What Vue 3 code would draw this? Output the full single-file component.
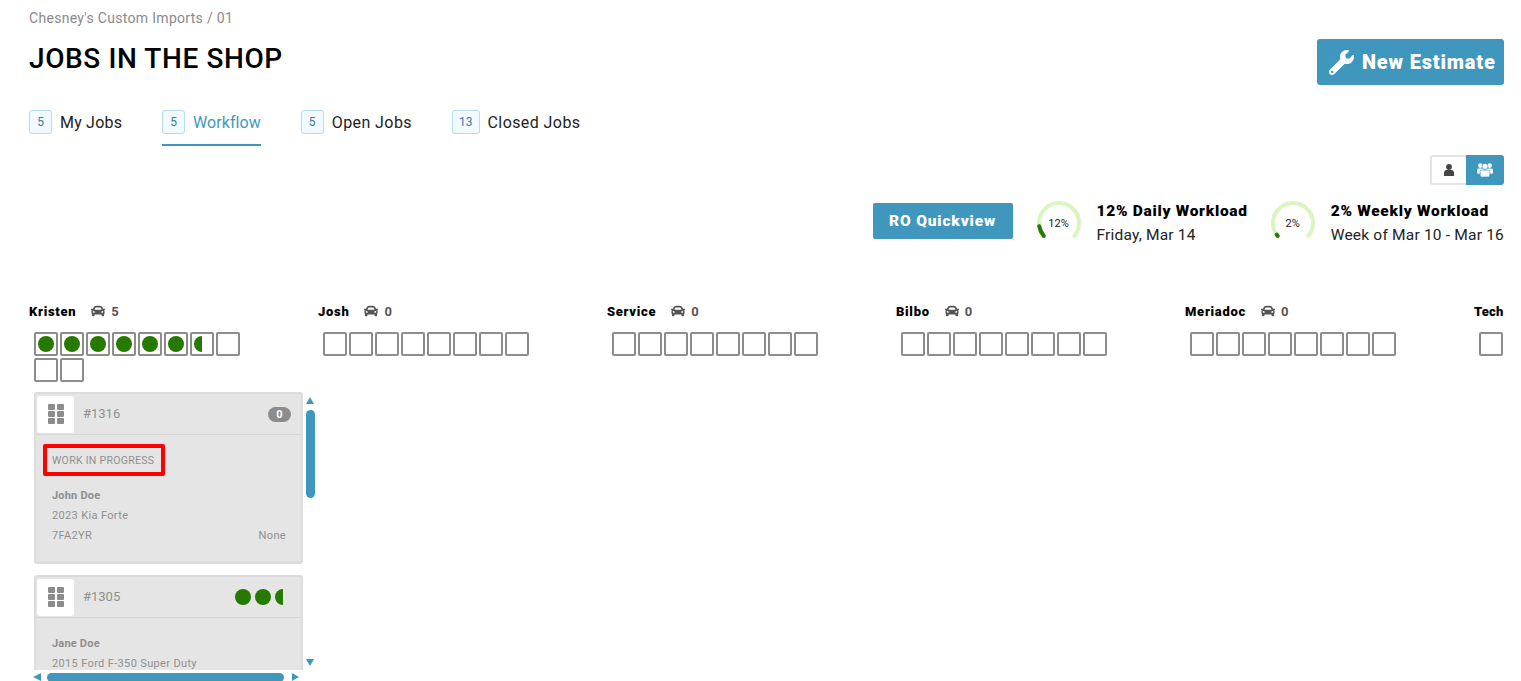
<template>
  <div class="page">
    <div class="crumb">Chesney's Custom Imports / 01</div>
    <div class="title-row">
      <h1>JOBS IN THE SHOP</h1>
      <button class="new-btn">
        <svg class="wrench" viewBox="0 0 512 512"><path fill="currentColor" :d="icons.wrench" /></svg>
        New Estimate
      </button>
    </div>

    <nav class="tabs">
      <a v-for="t in tabs" :key="t.label" class="tab" :class="{ active: t.active }">
        <span class="count">{{ t.count }}</span>{{ t.label }}
      </a>
    </nav>

    <div class="toggle-row">
      <div class="toggle">
        <span class="tg">
          <svg class="ic-user" viewBox="0 0 10 12" fill="currentColor">
            <circle cx="5" cy="3" r="2.9" />
            <path d="M0 12V8.6Q0 6.4 2.4 6h5.2Q10 6.4 10 8.6V12Z" />
          </svg>
        </span>
        <span class="tg on">
          <svg class="ic-users" viewBox="0 0 16 14" fill="currentColor">
            <circle cx="3.4" cy="2.6" r="2.3" />
            <circle cx="12.6" cy="2.6" r="2.3" />
            <rect x="0" y="5.4" width="16" height="5.4" rx="1.6" />
            <circle cx="8" cy="3.4" r="3" stroke="#3f97bd" stroke-width=".7" />
            <rect x="3.2" y="7" width="9.6" height="7" rx="1.4" stroke="#3f97bd" stroke-width=".7" />
          </svg>
        </span>
      </div>
    </div>

    <div class="stats">
      <button class="quick">RO Quickview</button>
      <div v-for="g in gauges" :key="g.title" class="stat">
        <div class="gauge">
          <svg width="44" height="44" viewBox="0 0 44 44">
            <path :d="arc" class="track" pathLength="100" />
            <path :d="arc" class="fill" pathLength="100" :stroke-dasharray="`${g.pct} 100`" />
          </svg>
          <span>{{ g.pct }}%</span>
        </div>
        <div class="stat-text">
          <b>{{ g.title }}</b>
          <span>{{ g.sub }}</span>
        </div>
      </div>
    </div>

    <div class="board">
      <section v-for="c in columns" :key="c.name" class="col">
        <header class="col-head">
          <b>{{ c.name }}</b>
          <template v-if="c.jobs !== null">
            <svg class="car" viewBox="0 0 512 512"><path fill="currentColor" :d="icons.car" /></svg>
            <span>{{ c.jobs }}</span>
          </template>
        </header>
        <div class="slots">
          <span v-for="n in c.slots" :key="n" class="slot">
            <i v-if="n <= c.full" class="dot"></i>
            <i v-else-if="n === c.full + 1 && c.half" class="dot half"></i>
          </span>
        </div>

        <template v-if="c.cards">
          <div class="list">
            <div class="cards">
              <article v-for="j in c.cards" :key="j.no" class="card">
                <div class="card-top">
                  <span class="grip"><i v-for="n in 6" :key="n"></i></span>
                  <span class="no">#{{ j.no }}</span>
                  <span v-if="j.badge !== undefined" class="badge">{{ j.badge }}</span>
                  <span v-else class="dots"><i></i><i></i><i class="cut"></i></span>
                </div>
                <div class="card-body">
                  <div v-if="j.status" class="status">{{ j.status }}</div>
                  <div class="who">{{ j.owner }}</div>
                  <div class="line">{{ j.car }}</div>
                  <div v-if="j.plate" class="line split"><span>{{ j.plate }}</span><span>{{ j.extra }}</span></div>
                </div>
              </article>
            </div>
            <div class="vbar">
              <i class="arrow up"></i>
              <i class="thumb"></i>
              <i class="arrow down"></i>
            </div>
          </div>
          <div class="hbar">
            <i class="arrow left"></i>
            <i class="thumb"></i>
            <i class="arrow right"></i>
          </div>
        </template>
      </section>
    </div>
  </div>
</template>

<script setup>
const icons = {
  wrench: 'M507.73 109.1c-2.24-9.03-13.54-12.09-20.12-5.51l-74.36 74.36-67.88-11.31-11.31-67.88 74.36-74.36c6.62-6.62 3.43-17.9-5.66-20.16-47.38-11.74-99.55.91-136.58 37.93-39.64 39.64-50.55 97.1-34.05 147.2L18.74 402.76c-24.99 24.99-24.99 65.51 0 90.5 24.99 24.99 65.51 24.99 90.5 0l213.21-213.21c50.12 16.71 107.47 5.68 147.37-34.22 37.07-37.07 49.7-89.32 37.91-136.73zM64 472c-13.25 0-24-10.75-24-24 0-13.26 10.75-24 24-24s24 10.74 24 24c0 13.25-10.75 24-24 24z',
  car: 'M499.99 176h-59.87l-16.64-41.6C406.38 91.63 365.57 64 319.5 64h-127c-46.06 0-86.88 27.63-103.99 70.4L71.87 176H12.01C4.2 176-1.53 183.34.37 190.91l6 24C7.7 220.25 12.5 224 18.01 224h20.07C24.65 235.73 16 252.78 16 272v48c0 16.12 6.16 30.67 16 41.93V416c0 17.67 14.33 32 32 32h32c17.67 0 32-14.33 32-32v-32h256v32c0 17.67 14.33 32 32 32h32c17.67 0 32-14.33 32-32v-54.07c9.84-11.25 16-25.8 16-41.93v-48c0-19.22-8.65-36.27-22.07-48H494c5.51 0 10.31-3.75 11.64-9.09l6-24c1.89-7.57-3.84-14.91-11.65-14.91zm-352.06-17.83c7.29-18.22 24.94-30.17 44.57-30.17h127c19.63 0 37.28 11.95 44.57 30.17L384 208H128l19.93-49.83zM96 319.8c-19.2 0-32-12.76-32-31.9S76.8 256 96 256s48 28.71 48 47.85-28.8 15.95-48 15.95zm320 0c-19.2 0-48 3.19-48-15.95S396.8 256 416 256s32 12.76 32 31.9-12.8 31.9-32 31.9z',
}

const arc = 'M6.7 34.9A20 20 0 1 1 37.3 34.9'

const tabs = [
  { label: 'My Jobs', count: 5 },
  { label: 'Workflow', count: 5, active: true },
  { label: 'Open Jobs', count: 5 },
  { label: 'Closed Jobs', count: 13 },
]

const gauges = [
  { pct: 12, title: '12% Daily Workload', sub: 'Friday, Mar 14' },
  { pct: 2, title: '2% Weekly Workload', sub: 'Week of Mar 10 - Mar 16' },
]

const columns = [
  {
    name: 'Kristen', jobs: 5, slots: 10, full: 6, half: true,
    cards: [
      { no: 1316, badge: 0, status: 'WORK IN PROGRESS', owner: 'John Doe', car: '2023 Kia Forte', plate: '7FA2YR', extra: 'None' },
      { no: 1305, owner: 'Jane Doe', car: '2015 Ford F-350 Super Duty' },
    ],
  },
  { name: 'Josh', jobs: 0, slots: 8, full: 0 },
  { name: 'Service', jobs: 0, slots: 8, full: 0 },
  { name: 'Bilbo', jobs: 0, slots: 8, full: 0 },
  { name: 'Meriadoc', jobs: 0, slots: 8, full: 0 },
  { name: 'Tech', jobs: null, slots: 8, full: 0 },
]
</script>

<style>
body { background: #fff; }
</style>

<style scoped>
.page {
  height: 681px;
  overflow: hidden;
  padding: 0 17px 0 29px;
  box-sizing: border-box;
  font-family: Roboto, "Liberation Sans", sans-serif;
  color: #111;
}
.crumb { padding-top: 9px; height: 18px; line-height: 18px; font-size: 14px; color: #8a8a8a; letter-spacing: .3px; }
.title-row { display: flex; justify-content: space-between; align-items: flex-start; margin-top: 12px; height: 71px; }
h1 { margin: 3px 0 0; font-size: 28px; line-height: 34px; font-weight: 500; color: #000; letter-spacing: .6px; }
.new-btn {
  display: flex; align-items: center; gap: 8px;
  width: 187px; height: 46px; padding: 0 0 0 12px;
  border: 0; border-radius: 3px; background: #3f97bd; color: #fff;
  font: 900 20px Roboto, sans-serif; letter-spacing: .82px; white-space: nowrap;
}
.wrench { width: 25px; height: 25px; flex: none; }

.tabs { display: flex; gap: 40px; height: 36px; }
.tab { display: flex; align-items: flex-start; height: 36px; box-sizing: border-box; font-size: 16px; line-height: 26px; letter-spacing: .2px; color: #222; }
.tab:nth-child(2) { letter-spacing: .05px; }
.tab:nth-child(3), .tab:nth-child(4) { letter-spacing: .42px; }
.tab.active { color: #3f97bd; border-bottom: 2px solid #3f97bd; }
.count {
  min-width: 23px; height: 24px; padding: 0 6px; box-sizing: border-box; margin-right: 8px;
  border: 1px solid #b5dcef; border-radius: 3px; background: #f1fafe; color: #3c78a6;
  font-size: 12px; line-height: 23px; text-align: center; letter-spacing: 0;
}

.toggle-row { display: flex; justify-content: flex-end; margin-top: 9px; }
.toggle { display: flex; height: 30px; }
.tg { width: 36px; height: 30px; box-sizing: border-box; display: flex; align-items: center; justify-content: center; border: 2px solid #e4e4e4; border-right: 0; border-radius: 3px 0 0 3px; color: #444; }
.tg.on { width: 38px; border: 0; border-radius: 0 3px 3px 0; background: #3f97bd; color: #fff; }
.ic-user { width: 10px; height: 12px; }
.ic-users { width: 16px; height: 14px; }

.stats { display: flex; justify-content: flex-end; align-items: flex-start; margin-top: 16px; height: 103px; }
.quick {
  width: 140px; height: 36px; margin: 2px 24px 0 0; border: 0; border-radius: 2px;
  background: #3f97bd; color: #fff; font: 900 15.5px Roboto, sans-serif; letter-spacing: .85px;
}
.stat { display: flex; gap: 16px; margin-right: 23px; }
.stat:last-child { margin-right: 0; }
.gauge { position: relative; width: 44px; height: 44px; }
.gauge svg { display: block; }
.gauge span { position: absolute; inset: 0; display: flex; align-items: center; justify-content: center; font-size: 11px; color: #222; }
.track, .fill { fill: none; stroke-width: 4; stroke-linecap: round; }
.track { stroke: #d9f5c0; }
.fill { stroke: #267a00; }
.stat-text { display: flex; flex-direction: column; line-height: 24px; margin-top: -2px; font-size: 15.5px; letter-spacing: .2px; color: #222; }
.stat-text b { color: #000; font-weight: 900; letter-spacing: .72px; }

.board { display: flex; overflow: hidden; height: 382px; }
.col { flex: 0 0 289px; display: flex; flex-direction: column; min-width: 0; }
.col-head { display: flex; align-items: center; height: 16px; margin-top: -1px; white-space: nowrap; font-size: 13px; color: #555; }
.col-head b { color: #000; font-weight: 900; margin-right: 15px; letter-spacing: .7px; }
.col:last-child .col-head b { margin-right: 0; letter-spacing: .2px; }
.col-head span { font-weight: 700; margin-left: 6px; }
.car { width: 14px; height: 14px; color: #555; }
.slots { display: flex; flex-wrap: wrap; gap: 2px; width: 210px; margin: 13px 0 0 5px; }
.slot {
  width: 24px; height: 24px; box-sizing: border-box; border: 2px solid #8c8c8c; border-radius: 2px;
  display: flex; align-items: center; justify-content: center;
}
.dot { width: 16px; height: 16px; border-radius: 50%; background: #267a00; }
.dot.half { clip-path: inset(0 50% 0 0); }

.list { display: flex; margin: 10px 0 0 5px; height: 278px; }
.cards { width: 269px; height: 278px; overflow: hidden; flex: none; }
.card { box-sizing: border-box; background: #e5e5e5; border: 2px solid #dcdcdc; border-width: 2px 2px 3px; border-radius: 3px; color: #8f8f8f; margin-bottom: 11px; }
.card-top { display: flex; align-items: center; height: 41px; padding: 0 10px 0 1px; box-sizing: border-box; border-bottom: 1px solid #d6d6d6; }
.grip {
  width: 37px; height: 37px; box-sizing: border-box; flex: none; padding-left: 11px; background: #fff; border-radius: 3px;
  display: grid; grid-template-columns: 7px 7px; grid-auto-rows: 6px; gap: 1.4px 1.6px; align-content: center;
}
.grip i { background: #8c8c8c; border-radius: 1px; }
.no { margin: -2px 0 0 9px; font-size: 13px; flex: 1; }
.badge { background: #8c8c8c; color: #fff; font-size: 11px; font-weight: 700; width: 23px; height: 15px; line-height: 15px; border-radius: 8px; text-align: center; }
.dots { display: flex; gap: 4px; margin-right: 8px; }
.dots i { width: 16px; height: 16px; border-radius: 50%; background: #267a00; }
.dots i.cut { clip-path: inset(0 50% 0 0); margin-right: -8px; }
.card-body { padding: 9px 15px 0 16px; font-size: 11px; }
.status {
  display: inline-block; box-sizing: border-box; height: 32px; line-height: 25px; padding: 0 0 0 5px; margin: 0 0 10px -9px; width: 122px;
  border: 4px solid #f00; border-radius: 2px; white-space: nowrap; font-size: 10.5px; letter-spacing: .3px;
}
.who { font-weight: 700; height: 20px; line-height: 20px; letter-spacing: .2px; }
.card:nth-child(2) .card-body { padding-top: 16px; }
.line { height: 20px; line-height: 20px; letter-spacing: .35px; }
.split { display: flex; justify-content: space-between; margin-bottom: 15px; }

.vbar { position: relative; width: 9px; margin-left: 3px; }
.vbar .thumb { position: absolute; left: 0; top: 18px; width: 9px; height: 88px; border-radius: 5px; background: #3f97bd; }
.arrow { position: absolute; width: 0; height: 0; }
.arrow.up { top: 5px; left: 0; border: 4.5px solid transparent; border-top: 0; border-bottom: 7px solid #3f97bd; }
.arrow.down { top: 267px; left: 0; border: 4.5px solid transparent; border-bottom: 0; border-top: 7px solid #3f97bd; }
.hbar { position: relative; height: 8px; margin-top: 3px; }
.hbar .thumb { position: absolute; left: 18px; top: 0; width: 237px; height: 9px; border-radius: 5px; background: #3f97bd; }
.arrow.left { left: 4px; top: 0; border: 4.5px solid transparent; border-left: 0; border-right: 8px solid #3f97bd; }
.arrow.right { left: 263px; top: 0; border: 4.5px solid transparent; border-right: 0; border-left: 7px solid #3f97bd; }
</style>
